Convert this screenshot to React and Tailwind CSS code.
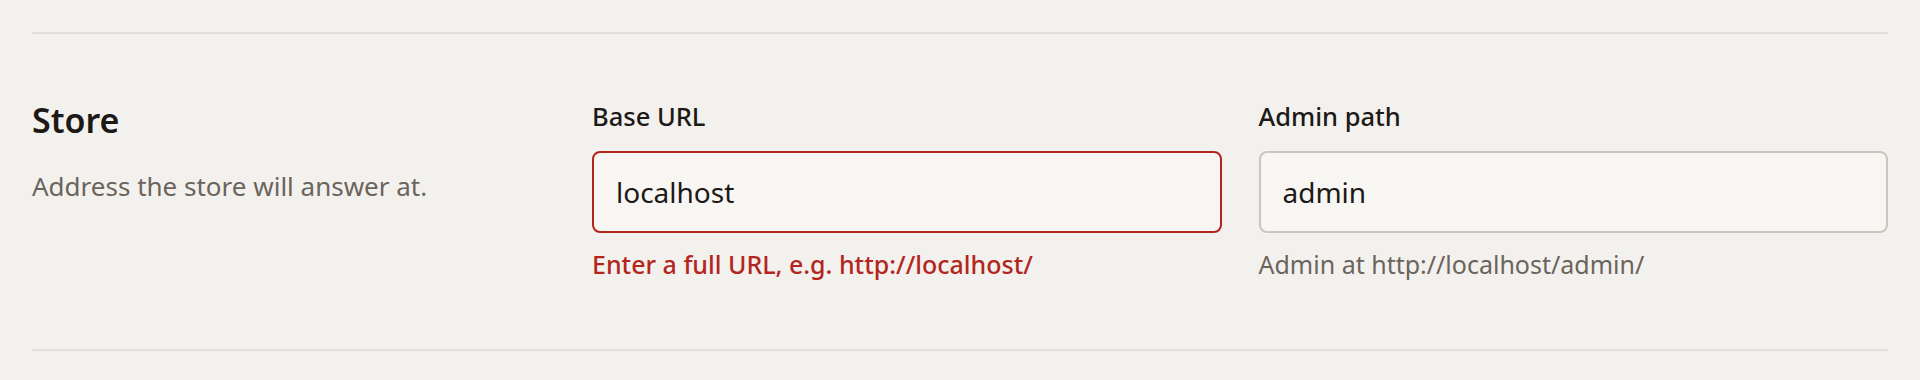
import React, { useState } from "react";

const fieldBase =
  "h-[82px] w-full rounded-lg border-2 bg-[#f7f6f3] px-[22px] text-[28px] text-[#1c1917] outline-none";

const StoreSettings = () => {
  const [baseUrl, setBaseUrl] = useState("localhost");
  const [adminPath, setAdminPath] = useState("admin");

  const urlOk = /^https?:\/\/.+/.test(baseUrl);

  return (
    <div
      className="h-screen overflow-hidden bg-[#f3f1ed] px-8 pt-8"
      style={{ fontFamily: '"Noto Sans", "Open Sans", sans-serif' }}
    >
      <section className="flex border-y-2 border-[#e3ded8] pt-[66px] pb-[69px]">
        <div className="w-[560px] shrink-0">
          <h2 className="text-[34px] leading-[40px] font-semibold text-[#1c1917]">
            Store
          </h2>
          <p className="mt-[28px] text-[26px] leading-[36px] text-[#6b645c]">
            Address the store will answer at.
          </p>
        </div>

        <div className="grid flex-1 grid-cols-2 gap-x-[37px]">
          <div>
            <label
              htmlFor="base-url"
              className="mb-[19px] block text-[25.5px] leading-[32px] font-medium text-[#1c1917]"
            >
              Base URL
            </label>
            <input
              id="base-url"
              type="text"
              value={baseUrl}
              onChange={(e) => setBaseUrl(e.target.value)}
              aria-invalid={!urlOk}
              className={`${fieldBase} ${
                urlOk ? "border-[#cdc6bd]" : "border-[#b3261e]"
              }`}
            />
            {!urlOk && (
              <p className="mt-[15px] text-[25px] leading-[32px] font-medium text-[#b3261e]">
                Enter a full URL, e.g. http://localhost/
              </p>
            )}
          </div>

          <div>
            <label
              htmlFor="admin-path"
              className="mb-[19px] block text-[25.5px] leading-[32px] font-medium text-[#1c1917]"
            >
              Admin path
            </label>
            <input
              id="admin-path"
              type="text"
              value={adminPath}
              onChange={(e) => setAdminPath(e.target.value)}
              className={`${fieldBase} border-[#cdc6bd]`}
            />
            <p className="mt-[15px] text-[25px] leading-[32px] text-[#6b645c]">
              Admin at http://localhost/{adminPath}/
            </p>
          </div>
        </div>
      </section>
    </div>
  );
};

export default StoreSettings;
